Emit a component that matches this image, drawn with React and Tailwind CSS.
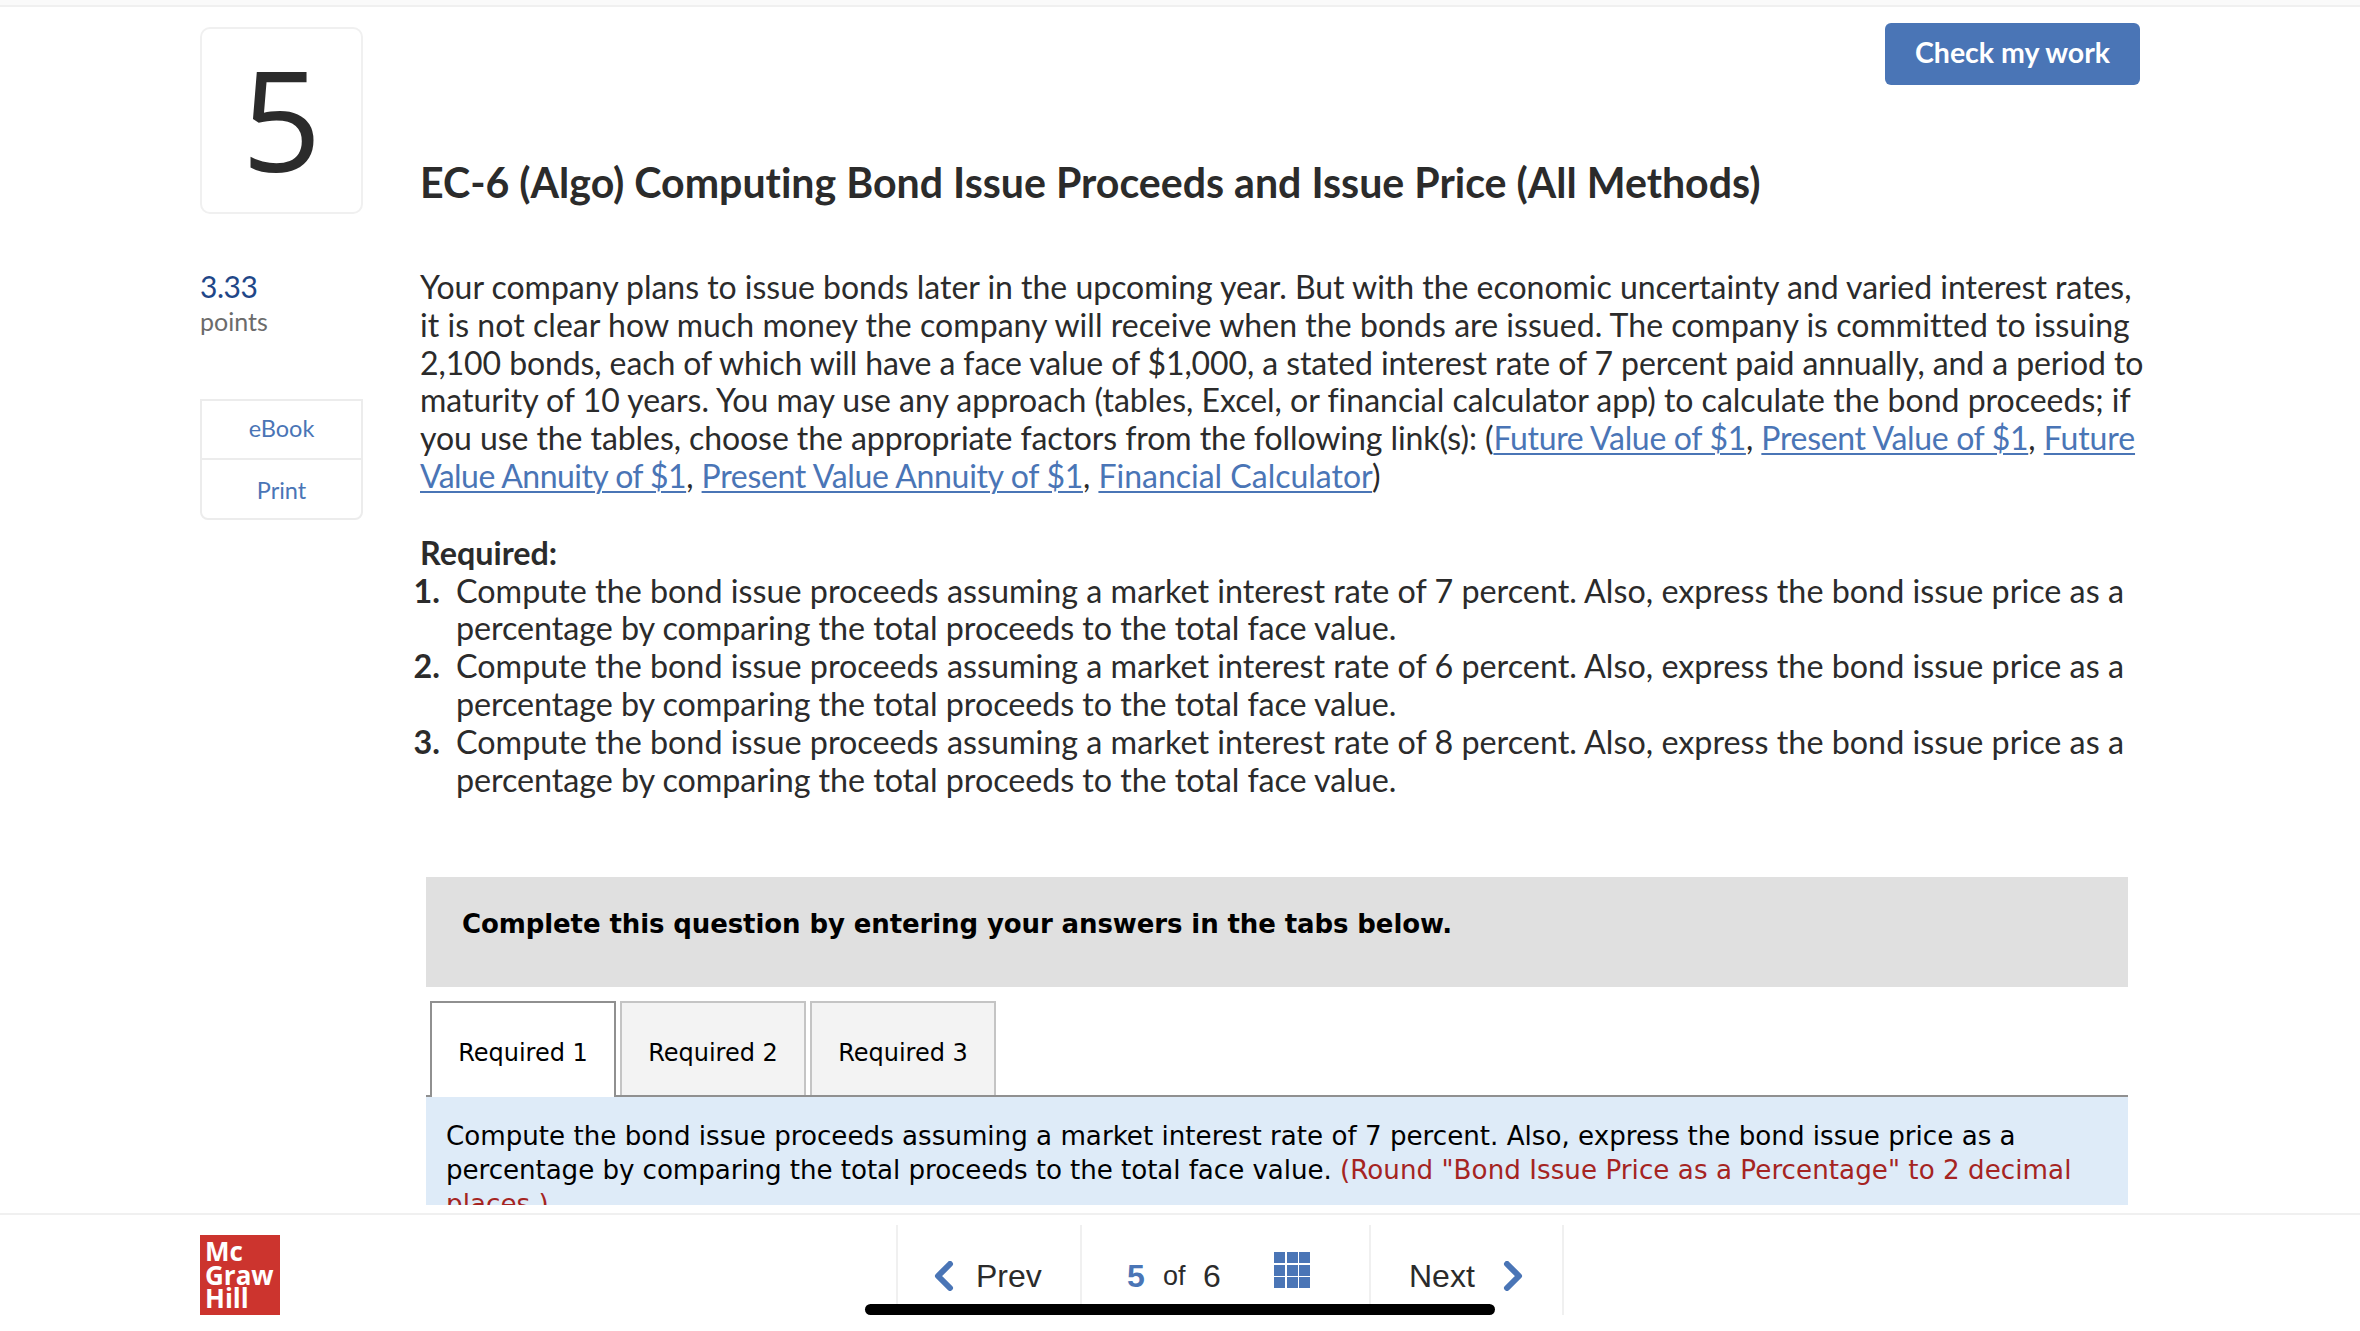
import React from "react";

const A = ({ tight, children }) => <a className={`text-[#4a75b6] underline underline-offset-[3px] decoration-[2px] ${tight || ""}`}>{children}</a>;

function Item({ n, a, b }) {
  return (
    <li className="flex">
      <span className="w-[36px] shrink-0 text-right pr-[16px] font-bold whitespace-nowrap flex justify-end">{n}</span>
      <span className="whitespace-nowrap">{a}<br /><span className="tracking-[-0.07px]">{b}</span></span>
    </li>
  );
}

function Chevron({ dir }) {
  return (
    <svg width="20" height="30" viewBox="0 0 20 30" fill="none" className="shrink-0">
      <path d={dir === "l" ? "M16 3 L4 15 L16 27" : "M4 3 L16 15 L4 27"} stroke="#4a75b6" strokeWidth="6" strokeLinecap="round" strokeLinejoin="round" />
    </svg>
  );
}

function Tab({ active, children }) {
  return (
    <div className={active
      ? "w-[186px] h-[96px] -mb-[2px] border-2 border-b-0 border-[#909090] bg-white flex items-center justify-center pt-[5px]"
      : "w-[186px] h-[94px] border-2 border-b-0 border-[#c4c4c4] bg-[#f3f3f3] flex items-center justify-center pt-[7px]"}>
      {children}
    </div>
  );
}

export default function App() {
  const sans = "font-['Lato','Liberation_Sans',sans-serif]";
  const second = "percentage by comparing the total proceeds to the total face value.";
  return (
    <div className={`${sans} [font-variant-ligatures:none] w-[2360px] h-[1331px] overflow-hidden bg-white flex flex-col relative text-[#2b2b2b]`}>
      <div className="h-[7px] shrink-0 bg-[#fafafa] border-b-2 border-[#f0f0f0]" />
      <main className="h-[1198px] shrink-0 overflow-hidden flex pl-[200px]">
        <aside className="w-[163px] shrink-0 pt-[20px]">
          <div className="h-[187px] border-2 border-[#f0f0f0] rounded-[10px] flex items-center justify-center text-[140px] leading-none font-medium text-[#2b2b2b] font-['Open_Sans',sans-serif] pb-[6px]">5</div>
          <div className="mt-[54px] text-[30px] leading-[36px] tracking-[-0.5px] text-[#1f4788]">3.33</div>
          <div className="text-[25px] leading-[34px] text-[#6b6b6b]">points</div>
          <div className="mt-[61px] border-2 border-[#ececec] rounded-b-[8px] text-[23.5px] text-[#4a75b6] text-center">
            <div className="h-[59px] flex items-center justify-center border-b-2 border-[#ececec] pb-[2px]">eBook</div>
            <div className="h-[58px] flex items-center justify-center pt-[3px]">Print</div>
          </div>
        </aside>
        <section className="ml-[57px] w-[1730px] shrink-0">
          <div className="flex justify-end pr-[10px] pt-[16px]">
            <button className="w-[255px] h-[62px] rounded-[6px] bg-[#4a75b6] text-white text-[28.5px] font-bold pb-[4px]">Check my work</button>
          </div>
          <h1 className="mt-[72px] text-[41.1px] leading-[50px] font-bold text-[#2b2b2b] whitespace-nowrap">EC-6 (Algo) Computing Bond Issue Proceeds and Issue Price (All Methods)</h1>
          <p className="mt-[61px] text-[32px] leading-[37.8px] whitespace-nowrap">
            <span className="tracking-[-0.02px]">Your company plans to issue bonds later in the upcoming year. But with the economic uncertainty and varied interest rates,</span><br />
            <span className="tracking-[0.05px]">it is not clear how much money the company will receive when the bonds are issued. The company is committed to issuing</span><br />
            <span className="tracking-[-0.095px]">2,100 bonds, each of which will have a face value of $1,000, a stated interest rate of 7 percent paid annually, and a period to</span><br />
            maturity of 10 years. You may use any approach (tables, Excel, or financial calculator app) to calculate the bond proceeds; if<br />
            <span className="tracking-[-0.075px]">you use the tables, choose the appropriate factors from the following link(s): (</span><A tight="tracking-[-0.33px]">Future Value of $1</A>, <A tight="tracking-[-0.33px]">Present Value of $1</A>, <A tight="tracking-[-0.1px]">Future</A><br />
            <A tight="tracking-[-0.55px]">Value Annuity of $1</A>, <A tight="tracking-[-0.33px]">Present Value Annuity of $1</A>, <A>Financial Calculator</A>)
          </p>
          <div className="mt-[39px] text-[32.3px] leading-[37.8px]">
            <div className="font-bold">Required:</div>
            <ol>
              <Item n="1." a="Compute the bond issue proceeds assuming a market interest rate of 7 percent. Also, express the bond issue price as a" b={second} />
              <Item n="2." a="Compute the bond issue proceeds assuming a market interest rate of 6 percent. Also, express the bond issue price as a" b={second} />
              <Item n="3." a="Compute the bond issue proceeds assuming a market interest rate of 8 percent. Also, express the bond issue price as a" b={second} />
            </ol>
          </div>
          <div className="mt-[79px] ml-[6px] w-[1702px] font-['DejaVu_Sans',sans-serif] text-black">
            <div className="h-[110px] bg-[#e0e0e0] px-[36px] pt-[28px] text-[26px] leading-[38px] tracking-[-0.1px] font-bold whitespace-nowrap">Complete this question by entering your answers in the tabs below.</div>
            <div className="mt-[14px] flex gap-[4px] pl-[4px] border-b-2 border-[#909090] text-[24px]">
              <Tab active>Required 1</Tab>
              <Tab>Required 2</Tab>
              <Tab>Required 3</Tab>
            </div>
            <div className="bg-[#deebf8] px-[20px] pt-[22px] h-[200px] text-[26.15px] leading-[34px] whitespace-nowrap">
              Compute the bond issue proceeds assuming a market interest rate of 7 percent. Also, express the bond issue price as a<br />
              <span className="tracking-[-0.065px]">percentage by comparing the total proceeds to the total face value. </span><span className="text-[#a52422] tracking-[0.05px]">(Round "Bond Issue Price as a Percentage" to 2 decimal<br />places.)</span>
            </div>
          </div>
        </section>
      </main>
      <div className="h-[8px] shrink-0 bg-white" />
      <footer className="flex-1 border-t-2 border-[#f0f0f0] relative pl-[200px] pt-[20px]">
        <div className="flex items-start">
          <div className="w-[80px] h-[80px] bg-[#cc342e] text-white font-['Open_Sans',sans-serif] font-bold text-[26px] leading-[23.5px] pl-[5px] pt-[5px] shrink-0">Mc<br />Graw<br />Hill</div>
          <nav className="ml-[616px] -mt-[10px] flex h-[90px] border-l-2 border-[#f0f0f0] font-['Liberation_Sans',sans-serif] text-[32px] text-[#2b2b2b]">
            <div className="w-[184px] border-r-2 border-[#f0f0f0] flex items-center gap-[22px] pl-[36px] pt-[12px]"><Chevron dir="l" />Prev</div>
            <div className="w-[289px] border-r-2 border-[#f0f0f0] flex items-center pl-[45px] pt-[12px]">
              <span className="font-bold text-[#4a75b6] w-[36px]">5</span>
              <span className="text-[27px] w-[40px]">of</span>
              <span className="w-[71px]">6</span>
              <div className="grid grid-cols-3 gap-[1.5px] w-[36px] h-[36px] -mt-[12px]">
                {Array.from({ length: 9 }, (_, i) => <span key={i} className="bg-[#4a75b6]" />)}
              </div>
            </div>
            <div className="w-[193px] border-r-2 border-[#f0f0f0] flex items-center gap-[28px] pl-[38px] pt-[12px]">Next<Chevron dir="r" /></div>
          </nav>
        </div>
        <div className="absolute left-[865px] top-[89px] w-[630px] h-[11px] rounded-full bg-black" />
      </footer>
    </div>
  );
}
